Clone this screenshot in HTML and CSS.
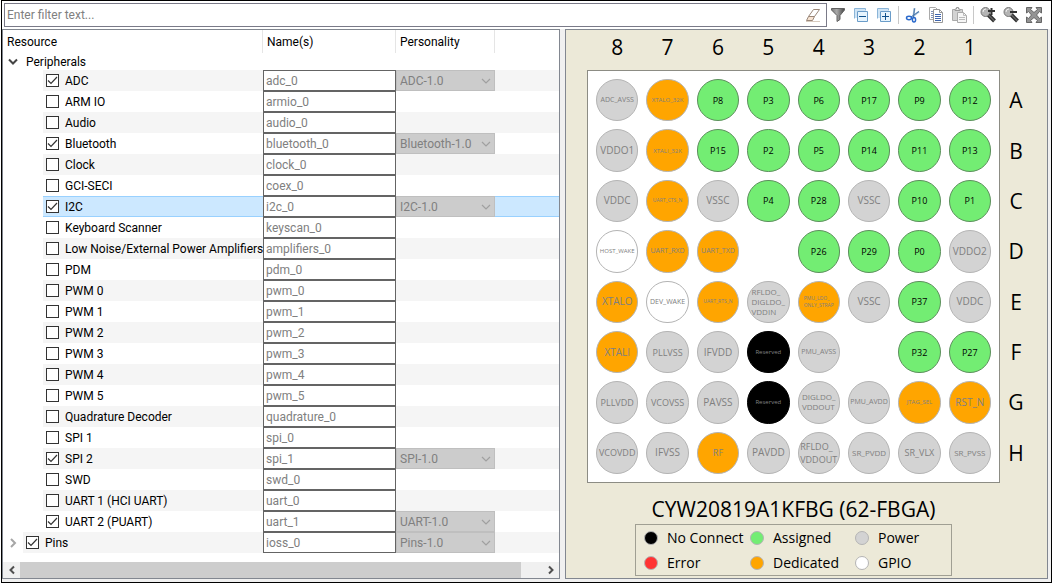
FILE: index.html
```html
<!DOCTYPE html>
<html lang="en">
<head>
<meta charset="utf-8">
<title>Device Configurator</title>
<link rel="stylesheet" href="styles.css">
</head>
<body>
<div class="frame">
  <header class="toolbar">
    <div class="filter">
      <input class="filter-input" type="text" placeholder="Enter filter text..." aria-label="Filter">
      <button class="tool" type="button" aria-label="Clear filter"><svg viewBox="0 0 16 16"><path d="M8.500 2.500h6l-5 7h-6z" fill="#fff" stroke="#9a8779"/><path d="M3.500 9.500h6l-2 4h-6z" fill="#f6e3d2" stroke="#9a8779"/><path d="M1 14.500h14" stroke="#d8cbbf"/></svg></button>
    </div>
    <div class="tools">
      <button class="tool" type="button" aria-label="Filter options"><svg viewBox="0 0 16 16"><defs><linearGradient id="fun"><stop offset="0" stop-color="#777"/><stop offset=".4" stop-color="#aaa"/><stop offset="1" stop-color="#444"/></linearGradient></defs><path d="M1.500 1.500h13v1.500L10 8.500v4l-3 2v-6L1.500 3z" fill="url(#fun)" stroke="#606060"/></svg></button>
      <button class="tool" type="button" aria-label="Collapse all"><svg viewBox="0 0 16 16"><path d="M1.500 11.500v-10h11v2" fill="none" stroke="#8bb5d8"/><path d="M2 2h10v2H4v7H2z" fill="#cfe4f5"/><path d="M4.500 4.500h10v10h-10z" fill="#e7f4fd" stroke="#6a9cc9"/><path d="M6 9.500h7" stroke="#10508c"/></svg></button>
      <button class="tool" type="button" aria-label="Expand all"><svg viewBox="0 0 16 16"><path d="M1.500 11.500v-10h11v2" fill="none" stroke="#8bb5d8"/><path d="M2 2h10v2H4v7H2z" fill="#cfe4f5"/><path d="M4.500 4.500h10v10h-10z" fill="#e7f4fd" stroke="#6a9cc9"/><path d="M6 9.500h7M9.500 6v7" stroke="#10508c"/></svg></button>
      <span class="sep"></span>
      <button class="tool" type="button" aria-label="Cut"><svg viewBox="0 0 16 16"><path d="M9.500 1 8.500 9M14 4.500 7 10" stroke="#a9c0d8" stroke-width="2"/><path d="M9.500 1.500 8.500 10M14 4.500 6 10" stroke="#4777ac"/><ellipse cx="4" cy="11" rx="2.500" ry="1.700" fill="none" stroke="#2a69cc" stroke-width="1.500"/><ellipse cx="9" cy="12.800" rx="1.600" ry="2.300" fill="none" stroke="#2a69cc" stroke-width="1.500"/></svg></button>
      <button class="tool" type="button" aria-label="Copy"><svg viewBox="0 0 16 16"><path d="M1.500.5h6l2 2v10h-8z" fill="#fff" stroke="#aaa"/><path d="M3 4.500h2M3 6.500h2M3 8.500h2M3 10.500h2" stroke="#8093bb"/><path d="M5.500 2.500h6l3 3v10h-9z" fill="#fff" stroke="#999"/><path d="M11.500 2.500v3h3" fill="none" stroke="#999"/><path d="M7 7.500h6M7 9.500h6M7 11.500h6M7 13.500h6" stroke="#3f65ad"/></svg></button>
      <button class="tool" type="button" aria-label="Paste"><svg viewBox="0 0 16 16"><path d="M1.500 2.500h10v11h-10z" fill="#d3d3d3" stroke="#aaa"/><path d="M4 3.500V2h1.500V.5h2V2H9v1.500z" fill="#eee" stroke="#999"/><path d="M6.500 5.500h6l3 3v7h-9z" fill="#f6f6f6" stroke="#aaa"/><path d="M12.500 5.500v3h3M8 10.500h6M8 12.500h6" fill="none" stroke="#bbb"/></svg></button>
      <span class="sep"></span>
      <button class="tool" type="button" aria-label="Zoom in"><svg viewBox="0 0 16 16"><circle cx="5.500" cy="5" r="4.500" fill="#b4b4b4" stroke="#777"/><path d="M3 5a3 3 0 0 1 3-3" fill="none" stroke="#eee"/><path d="m8.500 8 6 6" stroke="#333" stroke-width="4"/><path d="m8.500 8 6 6" stroke="#888"/><path d="M8 4h7M11.500 1v7" stroke="#333" stroke-width="2"/></svg></button>
      <button class="tool" type="button" aria-label="Zoom out"><svg viewBox="0 0 16 16"><circle cx="5.500" cy="5" r="4.500" fill="#b4b4b4" stroke="#777"/><path d="M3 5a3 3 0 0 1 3-3" fill="none" stroke="#eee"/><path d="m8.500 8 6 6" stroke="#333" stroke-width="4"/><path d="m8.500 8 6 6" stroke="#888"/><path d="M7 5h7" stroke="#333" stroke-width="2"/></svg></button>
      <button class="tool" type="button" aria-label="Zoom to fit"><svg viewBox="0 0 16 16"><path d="M.5.5h5.500L4.500 2.500 8 5.500l3.500-3L10 .5h5.500V6l-2-1.500L10.500 8l3 3.500 2-1.500v5.500H10l1.500-2L8 10.500l-3.500 3 1.500 2H.5V10l2 1.500 3-3.500-3-3.500L.5 6z" fill="#949494" stroke="#666"/></svg></button>
    </div>
  </header>

  <main class="main">
    <section class="panel tree">
      <table class="grid">
        <colgroup><col class="c-res"><col class="c-name"><col class="c-pers"><col></colgroup>
        <thead><tr><th>Resource</th><th>Name(s)</th><th>Personality</th><th></th></tr></thead>
        <tbody>
          <tr class="group"><td><div class="branch"><svg class="twist" viewBox="0 0 10 10"><path d="m1 2.500 4 4 4-4" fill="none" stroke="#444" stroke-width="2"/></svg><span>Peripherals</span></div></td><td></td><td></td><td></td></tr>
          <tr class="alt"><td><label class="node"><input type="checkbox" checked>ADC</label></td><td><input class="name" value="adc_0" aria-label="ADC name"></td><td><select disabled aria-label="ADC personality"><option>ADC-1.0</option></select></td><td></td></tr>
          <tr><td><label class="node"><input type="checkbox">ARM IO</label></td><td><input class="name" value="armio_0" aria-label="ARM IO name"></td><td></td><td></td></tr>
          <tr class="alt"><td><label class="node"><input type="checkbox">Audio</label></td><td><input class="name" value="audio_0" aria-label="Audio name"></td><td></td><td></td></tr>
          <tr><td><label class="node"><input type="checkbox" checked>Bluetooth</label></td><td><input class="name" value="bluetooth_0" aria-label="Bluetooth name"></td><td><select disabled aria-label="Bluetooth personality"><option>Bluetooth-1.0</option></select></td><td></td></tr>
          <tr class="alt"><td><label class="node"><input type="checkbox">Clock</label></td><td><input class="name" value="clock_0" aria-label="Clock name"></td><td></td><td></td></tr>
          <tr><td><label class="node"><input type="checkbox">GCI-SECI</label></td><td><input class="name" value="coex_0" aria-label="GCI-SECI name"></td><td></td><td></td></tr>
          <tr class="selected"><td><label class="node"><input type="checkbox" checked>I2C</label></td><td><input class="name" value="i2c_0" aria-label="I2C name"></td><td><select disabled aria-label="I2C personality"><option>I2C-1.0</option></select></td><td></td></tr>
          <tr><td><label class="node"><input type="checkbox">Keyboard Scanner</label></td><td><input class="name" value="keyscan_0" aria-label="Keyboard Scanner name"></td><td></td><td></td></tr>
          <tr class="alt"><td><label class="node"><input type="checkbox">Low Noise/External Power Amplifiers</label></td><td><input class="name" value="amplifiers_0" aria-label="Amplifiers name"></td><td></td><td></td></tr>
          <tr><td><label class="node"><input type="checkbox">PDM</label></td><td><input class="name" value="pdm_0" aria-label="PDM name"></td><td></td><td></td></tr>
          <tr class="alt"><td><label class="node"><input type="checkbox">PWM 0</label></td><td><input class="name" value="pwm_0" aria-label="PWM 0 name"></td><td></td><td></td></tr>
          <tr><td><label class="node"><input type="checkbox">PWM 1</label></td><td><input class="name" value="pwm_1" aria-label="PWM 1 name"></td><td></td><td></td></tr>
          <tr class="alt"><td><label class="node"><input type="checkbox">PWM 2</label></td><td><input class="name" value="pwm_2" aria-label="PWM 2 name"></td><td></td><td></td></tr>
          <tr><td><label class="node"><input type="checkbox">PWM 3</label></td><td><input class="name" value="pwm_3" aria-label="PWM 3 name"></td><td></td><td></td></tr>
          <tr class="alt"><td><label class="node"><input type="checkbox">PWM 4</label></td><td><input class="name" value="pwm_4" aria-label="PWM 4 name"></td><td></td><td></td></tr>
          <tr><td><label class="node"><input type="checkbox">PWM 5</label></td><td><input class="name" value="pwm_5" aria-label="PWM 5 name"></td><td></td><td></td></tr>
          <tr class="alt"><td><label class="node"><input type="checkbox">Quadrature Decoder</label></td><td><input class="name" value="quadrature_0" aria-label="Quadrature Decoder name"></td><td></td><td></td></tr>
          <tr><td><label class="node"><input type="checkbox">SPI 1</label></td><td><input class="name" value="spi_0" aria-label="SPI 1 name"></td><td></td><td></td></tr>
          <tr class="alt"><td><label class="node"><input type="checkbox" checked>SPI 2</label></td><td><input class="name" value="spi_1" aria-label="SPI 2 name"></td><td><select disabled aria-label="SPI 2 personality"><option>SPI-1.0</option></select></td><td></td></tr>
          <tr><td><label class="node"><input type="checkbox">SWD</label></td><td><input class="name" value="swd_0" aria-label="SWD name"></td><td></td><td></td></tr>
          <tr class="alt"><td><label class="node"><input type="checkbox">UART 1 (HCI UART)</label></td><td><input class="name" value="uart_0" aria-label="UART 1 name"></td><td></td><td></td></tr>
          <tr><td><label class="node"><input type="checkbox" checked>UART 2 (PUART)</label></td><td><input class="name" value="uart_1" aria-label="UART 2 name"></td><td><select disabled aria-label="UART 2 personality"><option>UART-1.0</option></select></td><td></td></tr>
          <tr class="alt"><td><div class="branch"><svg class="twist" viewBox="0 0 10 10"><path d="m3 1 4 4-4 4" fill="none" stroke="#a6a6a6" stroke-width="2"/></svg><label class="node"><input type="checkbox" checked>Pins</label></div></td><td><input class="name" value="ioss_0" aria-label="Pins name"></td><td><select disabled aria-label="Pins personality"><option>Pins-1.0</option></select></td><td></td></tr>
        </tbody>
      </table>
      <div class="scrollbar">
        <button type="button" aria-label="Scroll left"><svg viewBox="0 0 10 10"><path d="M7 1.500 3.500 5 7 8.500" fill="none" stroke="#505050" stroke-width="2"/></svg></button>
        <div class="track"><div class="thumb"></div></div>
        <button type="button" aria-label="Scroll right"><svg viewBox="0 0 10 10"><path d="M3 1.500 6.500 5 3 8.500" fill="none" stroke="#505050" stroke-width="2"/></svg></button>
      </div>
    </section>

    <section class="panel package">
      <div class="cols"><span>8</span><span>7</span><span>6</span><span>5</span><span>4</span><span>3</span><span>2</span><span>1</span></div>
      <div class="board">
        <div class="pin power t7">ADC_AVSS</div><div class="pin dedicated t6">XTALO_32K</div><div class="pin assigned">P8</div><div class="pin assigned">P3</div><div class="pin assigned">P6</div><div class="pin assigned">P17</div><div class="pin assigned">P9</div><div class="pin assigned">P12</div>
        <div class="pin power t10">VDDO1</div><div class="pin dedicated t6">XTALI_32K</div><div class="pin assigned">P15</div><div class="pin assigned">P2</div><div class="pin assigned">P5</div><div class="pin assigned">P14</div><div class="pin assigned">P11</div><div class="pin assigned">P13</div>
        <div class="pin power t10">VDDC</div><div class="pin dedicated t5">UART_CTS_N</div><div class="pin power t10">VSSC</div><div class="pin assigned">P4</div><div class="pin assigned">P28</div><div class="pin power t10">VSSC</div><div class="pin assigned">P10</div><div class="pin assigned">P1</div>
        <div class="pin gpio t6">HOST_WAKE</div><div class="pin dedicated t7">UART_RXD</div><div class="pin dedicated t7">UART_TXD</div><div></div><div class="pin assigned">P26</div><div class="pin assigned">P29</div><div class="pin assigned">P0</div><div class="pin power t10">VDDO2</div>
        <div class="pin dedicated t10">XTALO</div><div class="pin gpio t7">DEV_WAKE</div><div class="pin dedicated t5">UART_RTS_N</div><div class="pin power t8"><span>RFLDO_<br>DIGLDO_<br>VDDIN</span></div><div class="pin dedicated t5"><span>PMU_LDO_<br>ONLY_STRAP</span></div><div class="pin power t10">VSSC</div><div class="pin assigned">P37</div><div class="pin power t10">VDDC</div>
        <div class="pin dedicated t10">XTALI</div><div class="pin power">PLLVSS</div><div class="pin power t10">IFVDD</div><div class="pin none t6">Reserved</div><div class="pin power t7">PMU_AVSS</div><div></div><div class="pin assigned">P32</div><div class="pin assigned">P27</div>
        <div class="pin power">PLLVDD</div><div class="pin power">VCOVSS</div><div class="pin power t10">PAVSS</div><div class="pin none t6">Reserved</div><div class="pin power t8"><span>DIGLDO_<br>VDDOUT</span></div><div class="pin power t7">PMU_AVDD</div><div class="pin dedicated t6">JTAG_SEL</div><div class="pin dedicated t10">RST_N</div>
        <div class="pin power">VCOVDD</div><div class="pin power t10">IFVSS</div><div class="pin dedicated">RF</div><div class="pin power t10">PAVDD</div><div class="pin power"><span>RFLDO_<br>VDDOUT</span></div><div class="pin power t8">SR_PVDD</div><div class="pin power">SR_VLX</div><div class="pin power t8">SR_PVSS</div>
      </div>
      <div class="rows"><span>A</span><span>B</span><span>C</span><span>D</span><span>E</span><span>F</span><span>G</span><span>H</span></div>
      <div class="caption">
        <h1>CYW20819A1KFBG (62-FBGA)</h1>
        <ul class="legend">
          <li><i class="dot none"></i>No Connect</li><li><i class="dot assigned"></i>Assigned</li><li><i class="dot power"></i>Power</li>
          <li><i class="dot error"></i>Error</li><li><i class="dot dedicated"></i>Dedicated</li><li><i class="dot gpio"></i>GPIO</li>
        </ul>
      </div>
    </section>
  </main>
</div>
</body>
</html>
```
FILE: styles.css
```css
* { box-sizing: border-box; }

body {
  margin: 0;
  background: #fff;
  color: #000;
  font: 12px/16px Roboto, "Open Sans", sans-serif;
}

button, input, select { font: inherit; margin: 0; }

.frame {
  display: flex;
  flex-direction: column;
  min-height: 100vh;
  margin-left: 1px;
  border: 1px solid #000;
  background: #fff;
}

/* Toolbar */
.toolbar {
  display: flex;
  align-items: center;
  gap: 3px;
  padding: 2px 9px 2px 2px;
}
.filter {
  display: flex;
  flex: 1;
  align-items: center;
  height: 24px;
  padding-right: 5px;
  border: 1px solid #7a7a88;
}
.filter-input {
  flex: 1;
  min-width: 0;
  padding: 0 2px;
  border: 0;
  outline: 0;
  background: none;
}
.filter-input::placeholder { color: #808080; opacity: 1; }
.tools { display: flex; align-items: center; gap: 7px; }
.tool {
  width: 16px;
  height: 16px;
  padding: 0;
  border: 0;
  background: none;
}
.tool svg { display: block; width: 16px; height: 16px; }
.sep { width: 1px; height: 18px; margin: 0 -1px 0 -1px; background: #c8c8c8; }

/* Panels */
.main {
  display: grid;
  flex: 1;
  grid-template-columns: 558fr 483fr;
  gap: 5px;
  padding: 0 3px 3px 0;
  background: #f0f0f0;
}
.panel { min-width: 0; border: 1px solid #828790; }

/* Resource tree */
.tree {
  display: flex;
  flex-direction: column;
  justify-content: space-between;
  overflow: hidden;
  background: #fff;
}
.grid { width: 100%; border-collapse: collapse; table-layout: fixed; }
.c-res { width: 260px; }
.c-name { width: 133px; }
.c-pers { width: 99px; }
.grid th {
  height: 23px;
  padding: 0 4px;
  font-weight: 400;
  text-align: left;
  background: linear-gradient(#e5e5e5, #e5e5e5) right / 1px 100% no-repeat;
}
.grid th:last-child { background: none; }
.grid td { height: 21px; padding: 0; }
.grid .group td { height: 17px; }

.branch { display: flex; align-items: center; }
.twist { flex: none; width: 10px; height: 10px; margin: 0 5px; }
.branch > span { padding-left: 3px; }
.branch .node { flex: 1; margin-left: 0; }
.node {
  display: flex;
  align-items: center;
  gap: 6px;
  height: 21px;
  margin-left: 40px;
  padding-left: 3px;
  white-space: nowrap;
}
.alt .node, .alt td:nth-child(n+3) { background: #f5f5f5; }
.selected .node, .selected td:nth-child(n+3) {
  background: #cce8ff;
  box-shadow: inset 0 1px #99d1ff, inset 0 -1px #99d1ff;
}

input[type="checkbox"] {
  flex: none;
  width: 13px;
  height: 13px;
  border: 1px solid #333;
  appearance: none;
  background: #fff;
}
input[type="checkbox"]:checked {
  background: #fff url("data:image/svg+xml,%3Csvg xmlns='http://www.w3.org/2000/svg' viewBox='0 0 11 11'%3E%3Cpath d='m1 5.500 3 3 6-6.500' fill='none' stroke='%23333' stroke-width='1.200'/%3E%3C/svg%3E") center / 11px no-repeat;
}
.name, select {
  display: block;
  width: 100%;
  height: 21px;
  border-radius: 0;
  outline: 0;
}
.name {
  padding: 0 2px;
  border: 1px solid #646464;
  background: #fff;
  color: #808080;
}
select {
  padding: 0 3px;
  border: 1px solid #bfbfbf;
  appearance: none;
  background: #ccc url("data:image/svg+xml,%3Csvg xmlns='http://www.w3.org/2000/svg' viewBox='0 0 10 10'%3E%3Cpath d='m1 3 4 4 4-4' fill='none' stroke='%23a0a0a0' stroke-width='1.200'/%3E%3C/svg%3E") right 3px center / 10px no-repeat;
  color: #808080;
  opacity: 1;
}

.scrollbar { display: flex; height: 16px; background: #f0f0f0; }
.scrollbar button {
  display: grid;
  width: 17px;
  padding: 0;
  border: 0;
  background: none;
  place-items: center;
}
.scrollbar svg { width: 10px; height: 10px; }
.track { flex: 1; }
.thumb { width: 96%; height: 100%; background: #cdcdcd; }

/* Package view */
.package {
  display: grid;
  grid-template-columns: 1fr 32px;
  align-content: start;
  padding: 0 15px 0 21px;
  background: #ece9d8;
  font-family: "Open Sans", "Noto Sans", sans-serif;
}
.cols, .rows { display: grid; font-size: 21px; line-height: 24px; }
.cols {
  grid-column: 1 / -1;
  grid-template-columns: repeat(8, 1fr);
  height: 40px;
  margin-right: 32px;
  padding: 5px;
  text-align: center;
}
.rows { grid-template-rows: repeat(8, 1fr); align-items: center; justify-items: center; padding: 5px 0; }
.board {
  display: grid;
  grid-template-columns: repeat(8, 1fr);
  gap: 8px;
  padding: 8px;
  border: 1px solid #8c8c84;
  background: #fff;
}
.pin {
  display: flex;
  align-items: center;
  justify-content: center;
  min-width: 0;
  aspect-ratio: 1;
  border: 1px solid #b4b4b4;
  border-radius: 50%;
  color: #808080;
  font-size: 9px;
  line-height: 13px;
  white-space: nowrap;
}
.t5 { font-size: 5px; line-height: 7px; }
.t6 { font-size: 6px; line-height: 8px; }
.t7 { font-size: 7px; line-height: 10px; }
.t8 { font-size: 8px; line-height: 10px; }
.t10 { font-size: 10px; }

.power { background: #d3d3d3; }
.dedicated { background: #ffa500; }
.gpio { background: #fff; }
.none { background: #000; border-color: #000; }
.error { background: #f33; }
.assigned { background: #73ed73; }
.pin.assigned { border-color: #5c8f5c; color: #000; }

.caption {
  display: flex;
  flex-direction: column;
  align-items: center;
}
.caption h1 {
  margin: 0;
  padding-top: 11px;
  font-size: 21px;
  font-weight: 400;
  line-height: 30px;
  white-space: nowrap;
}
.legend {
  display: grid;
  grid-template-columns: 106px 105px 88px;
  width: 317px;
  margin: 0;
  padding: 0 8px;
  border: 1px solid #a09f93;
  font-size: 14px;
  line-height: 25px;
  list-style: none;
}
.legend li { display: flex; align-items: center; gap: 9px; white-space: nowrap; }
.dot { width: 14px; height: 14px; border: 1px solid #b4b4b4; border-radius: 50%; }
```
